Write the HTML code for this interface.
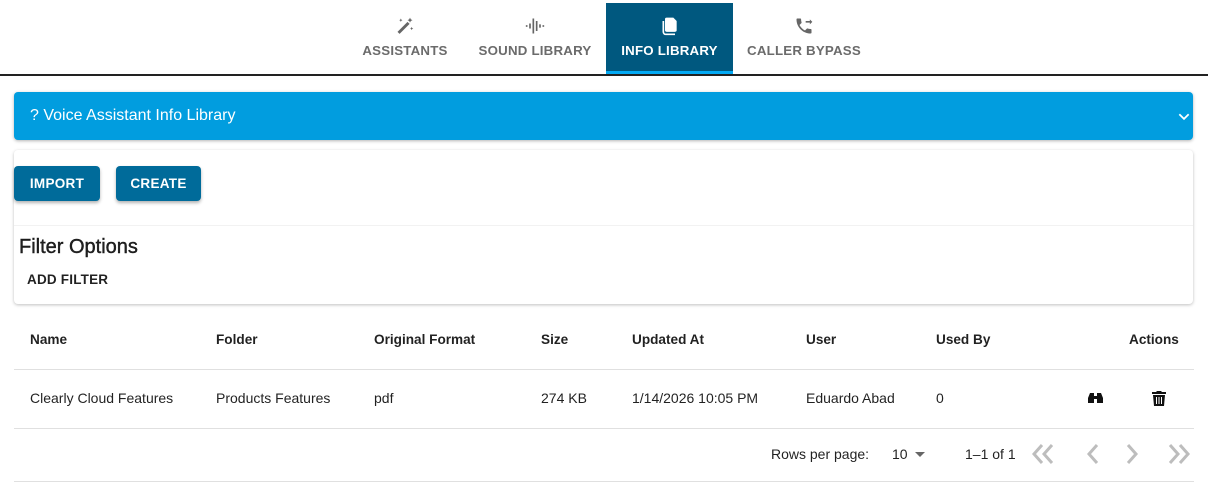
<!DOCTYPE html>
<html><head><meta charset="utf-8"><style>
*{box-sizing:border-box;margin:0;padding:0}
body{width:1208px;height:487px;background:#fff;font-family:"Liberation Sans",sans-serif;position:relative;overflow:hidden;color:rgba(0,0,0,.87)}
.tab{position:absolute;top:3px;height:71px;text-align:center;font-size:13.3px;font-weight:bold;color:#6b6b6b;letter-spacing:.2px}
.tab svg{position:absolute;top:13px;left:50%;margin-left:-10px}
.tab span{position:absolute;top:40px;left:0;right:0}
.abs{position:absolute}
.btn{position:absolute;top:166px;height:35px;background:#006b9a;color:#fff;font-size:13.5px;font-weight:bold;border-radius:4px;box-shadow:0 2px 3px rgba(0,0,0,.3);text-align:center;line-height:35px;letter-spacing:.3px}
.th{position:absolute;top:332px;font-size:13.6px;font-weight:bold}
.td{position:absolute;top:390px;font-size:14px}
.hr{position:absolute;left:14px;right:14px;height:1px;background:#e0e0e0}
</style></head><body>
<div class="tab" style="left:348px;width:114px"><svg width="20" height="20" viewBox="0 0 24 24" fill="#666"><path d="M3 19l12-12 2.5 2.5-12 12z"/><path d="M18 2l1 2 2 1-2 1-1 2-1-2-2-1 2-1zM7 3l.7 1.5L9 5l-1.3.6L7 7l-.7-1.4L5 5l1.3-.5zM20 13l.7 1.5 1.3.5-1.3.6L20 17l-.7-1.4L18 15l1.3-.5z"/></svg><span>ASSISTANTS</span></div>
<div class="tab" style="left:468px;width:134px"><svg width="20" height="20" viewBox="0 0 24 24" fill="#666"><rect x="1" y="11" width="2" height="2"/><rect x="5" y="9" width="2" height="6"/><rect x="9" y="3" width="2" height="18"/><rect x="13" y="6" width="2" height="12"/><rect x="17" y="10" width="2" height="4"/><rect x="21" y="11" width="2" height="2"/></svg><span>SOUND LIBRARY</span></div>
<div class="tab" style="left:606px;width:127px;background:#00587f;color:#fff"><svg width="20" height="20" viewBox="0 0 24 24" fill="#fff"><path d="M8 2h8l4 4v11a2 2 0 0 1-2 2H8a2 2 0 0 1-2-2V4a2 2 0 0 1 2-2z"/><path d="M3 6h2v13a2 2 0 0 0 2 2h11v2H7a4 4 0 0 1-4-4z"/></svg><span>INFO LIBRARY</span><div class="abs" style="left:0;right:0;bottom:0;height:3px;background:#03a9f4"></div></div>
<div class="tab" style="left:737px;width:134px"><svg width="20" height="20" viewBox="0 0 24 24" fill="#666"><path d="M6.6 10.8c1.4 2.8 3.8 5.1 6.6 6.6l2.2-2.2c.3-.3.7-.4 1-.2 1.1.4 2.3.6 3.6.6.6 0 1 .4 1 1V20c0 .6-.4 1-1 1C10.6 21 3 13.4 3 4c0-.6.4-1 1-1h3.5c.6 0 1 .4 1 1 0 1.3.2 2.5.6 3.6.1.3 0 .7-.2 1z"/><path d="M14 6h5V4l3 3-3 3V8h-5z"/></svg><span>CALLER BYPASS</span></div>
<div class="abs" style="left:0;right:0;top:74px;height:2px;background:#222"></div>

<div class="abs" style="left:14px;top:92px;width:1179px;height:48px;background:#019ddf;border-radius:4px;box-shadow:0 1px 3px rgba(0,0,0,.3);color:#fff;font-size:16px;line-height:48px;padding-left:16px">? Voice Assistant Info Library
<svg class="abs" style="left:1163px;top:17px" width="14" height="14" viewBox="0 0 24 24" fill="none" stroke="#fff" stroke-width="3"><path d="M4 9l8 8 8-8"/></svg></div>

<div class="abs" style="left:14px;top:150px;width:1179px;height:154px;background:#fff;border-radius:4px;box-shadow:0 1px 3px rgba(0,0,0,.25)"></div>
<div class="abs" style="left:14px;top:225px;width:1179px;height:1px;background:#f2f2f2"></div>
<div class="btn" style="left:14px;width:86px">IMPORT</div>
<div class="btn" style="left:116px;width:85px">CREATE</div>
<div class="abs" style="left:19px;top:236px;font-size:20px;-webkit-text-stroke:0.4px rgba(0,0,0,.87)">Filter Options</div>
<div class="abs" style="left:27px;top:272px;font-size:13.5px;font-weight:bold;letter-spacing:.2px">ADD FILTER</div>

<div class="th" style="left:30px">Name</div>
<div class="th" style="left:216px">Folder</div>
<div class="th" style="left:374px">Original Format</div>
<div class="th" style="left:541px">Size</div>
<div class="th" style="left:632px">Updated At</div>
<div class="th" style="left:806px">User</div>
<div class="th" style="left:936px">Used By</div>
<div class="th" style="left:1129px">Actions</div>
<div class="hr" style="top:369px"></div>
<div class="td" style="left:30px">Clearly Cloud Features</div>
<div class="td" style="left:216px">Products Features</div>
<div class="td" style="left:374px">pdf</div>
<div class="td" style="left:541px">274 KB</div>
<div class="td" style="left:632px">1/14/2026 10:05 PM</div>
<div class="td" style="left:806px">Eduardo Abad</div>
<div class="td" style="left:936px">0</div>
<svg class="abs" style="left:1088px;top:391px" width="15" height="14" viewBox="0 0 15 14" fill="#111"><path d="M2 2h4v10H0V7zM9 2h4l2 5v5H9zM6 5h3v3H6z"/></svg>
<svg class="abs" style="left:1152px;top:391px" width="14" height="15" viewBox="0 0 14 15" fill="#111"><path d="M0 1h4l1-1h4l1 1h4v2H0zM1 4h12l-1 11H2z"/><path d="M4 6h1v7H4zM6.5 6h1v7h-1zM9 6h1v7H9z" fill="#fff"/></svg>
<div class="hr" style="top:428px"></div>
<div class="abs" style="left:771px;top:446px;font-size:14px">Rows per page:</div>
<div class="abs" style="left:892px;top:446px;font-size:14px">10</div>
<svg class="abs" style="left:914px;top:452px" width="12" height="6"><path d="M1 0h10L6 5z" fill="#666"/></svg>
<div class="abs" style="left:965px;top:446px;font-size:14px">1–1 of 1</div>
<svg class="abs" style="left:1030px;top:442px" width="165" height="24" viewBox="0 0 165 24" fill="none" stroke="#bdbdbd" stroke-width="3"><path d="M12 3L4 12l8 9M22 3l-8 9 8 9M67 3l-8 9 8 9M98 3l8 9-8 9M140 3l8 9-8 9M150 3l8 9-8 9"/></svg>
<div class="hr" style="top:481px"></div>
</body></html>
